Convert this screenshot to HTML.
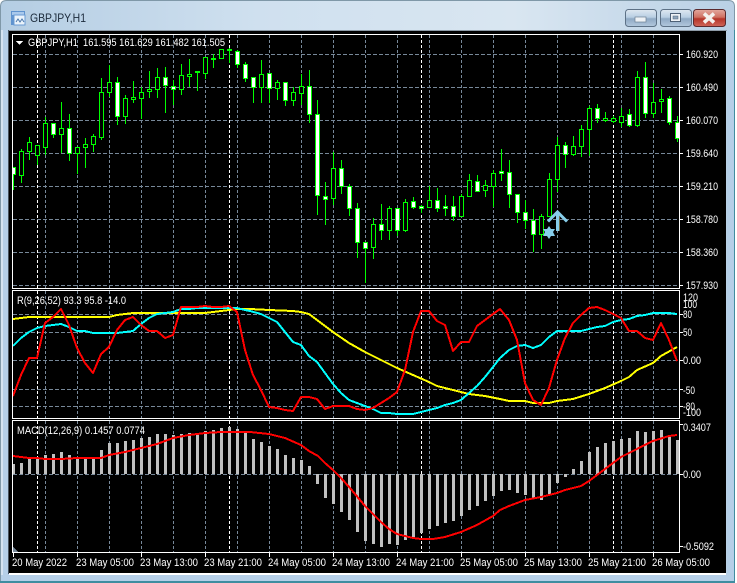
<!DOCTYPE html>
<html><head><meta charset="utf-8"><title>GBPJPY,H1</title>
<style>
html,body{margin:0;padding:0;background:#fff;width:737px;height:583px;overflow:hidden}
svg{position:absolute;left:0;top:0;display:block}
text{font-family:"Liberation Sans",sans-serif;font-size:11px;fill:#fff}
</style></head><body>
<svg width="737" height="583" viewBox="0 0 737 583" xmlns="http://www.w3.org/2000/svg">
<defs>
<linearGradient id="tb" x1="0" y1="0" x2="1" y2="0"><stop offset="0" stop-color="#b4cde3"/><stop offset=".35" stop-color="#cfe0ef"/><stop offset=".7" stop-color="#d9e6f1"/><stop offset="1" stop-color="#b9d0e5"/></linearGradient>
<linearGradient id="bt" x1="0" y1="0" x2="0" y2="1"><stop offset="0" stop-color="#dfe8f1"/><stop offset=".45" stop-color="#b9cfe3"/><stop offset=".55" stop-color="#8fa9c4"/><stop offset="1" stop-color="#b3c9de"/></linearGradient>
<linearGradient id="cl" x1="0" y1="0" x2="0" y2="1"><stop offset="0" stop-color="#e3a99f"/><stop offset=".45" stop-color="#cf7163"/><stop offset=".55" stop-color="#b5352a"/><stop offset="1" stop-color="#d0675a"/></linearGradient>
<clipPath id="c1"><rect x="13" y="35" width="666" height="253"/></clipPath>
<clipPath id="c2"><rect x="13" y="291" width="666" height="127"/></clipPath>
<clipPath id="c3"><rect x="13" y="421" width="666" height="131"/></clipPath>
</defs>

<!-- window chrome -->
<path d="M.5 582.5V6.5Q.5 .5 6.5 .5H728.5Q734.5 .5 734.5 6.5V582.5Z" fill="url(#tb)" stroke="#7f98a8"/>
<rect x="1" y="30" width="8" height="551" fill="#b5cfe8"/>
<rect x="1" y="30" width="2" height="551" fill="#d5e3f1"/>
<rect x="727" y="30" width="7" height="551" fill="#b5cfe8"/>
<rect x="1" y="575" width="733" height="6" fill="#b5cfe8"/>
<rect x="0" y="581" width="735" height="2" fill="#3f8da0"/>
<rect x="734" y="30" width="1" height="553" fill="#3f8da0"/>
<rect x="8" y="30" width="1" height="544" fill="#45525e"/>
<rect x="9" y="31" width="717" height="542" fill="#000"/>
<rect x="9" y="573" width="717" height="2" fill="#fff"/>
<rect x="9" y="30" width="718" height="1" fill="#8d9aa6"/>

<!-- title icon and text -->
<g shape-rendering="crispEdges">
<rect x="11" y="11" width="14" height="14" fill="#5f93cf"/>
<rect x="12" y="12" width="12" height="3" fill="#a9c9ec"/>
<rect x="14" y="15" width="11" height="10" fill="#eaf3fb" stroke="#6a9bd3"/>
</g>
<path d="M16 22l2-3 2 3 2-3 2 3" fill="none" stroke="#4a78ad"/>
<text x="30" y="22" style="font-size:12px;fill:#1b2a3a" textLength="56" lengthAdjust="spacingAndGlyphs">GBPJPY,H1</text>

<!-- window buttons -->
<rect x="625.5" y="9.5" width="31" height="17" rx="3" fill="url(#bt)" stroke="#5d7186"/>
<rect x="635" y="17" width="11" height="5" fill="#eef2f6" stroke="#6b7f93" stroke-width=".7"/>
<rect x="660.5" y="9.5" width="31" height="17" rx="3" fill="url(#bt)" stroke="#5d7186"/>
<rect x="670.5" y="13.5" width="10" height="8" fill="#eef2f6" stroke="#4e6176"/>
<rect x="673" y="16" width="5" height="3" fill="#8fa5bb" stroke="#4e6176" stroke-width=".5"/>
<rect x="693.5" y="9.5" width="32" height="17" rx="3" fill="url(#cl)" stroke="#5b2a2e"/>
<path d="M704 13.5l10 9M714 13.5l-10 9" stroke="#f4f1ee" stroke-width="3.6" fill="none"/>

<g shape-rendering="crispEdges">
<!-- grids -->
<path d="M45.5 35V288M77.5 35V288M109.5 35V288M141.5 35V288M173.5 35V288M205.5 35V288M237.5 35V288M269.5 35V288M301.5 35V288M333.5 35V288M365.5 35V288M397.5 35V288M429.5 35V288M461.5 35V288M493.5 35V288M525.5 35V288M557.5 35V288M589.5 35V288M621.5 35V288M653.5 35V288
M45.5 291V418M77.5 291V418M109.5 291V418M141.5 291V418M173.5 291V418M205.5 291V418M237.5 291V418M269.5 291V418M301.5 291V418M333.5 291V418M365.5 291V418M397.5 291V418M429.5 291V418M461.5 291V418M493.5 291V418M525.5 291V418M557.5 291V418M589.5 291V418M621.5 291V418M653.5 291V418
M45.5 421V552M77.5 421V552M109.5 421V552M141.5 421V552M173.5 421V552M205.5 421V552M237.5 421V552M269.5 421V552M301.5 421V552M333.5 421V552M365.5 421V552M397.5 421V552M429.5 421V552M461.5 421V552M493.5 421V552M525.5 421V552M557.5 421V552M589.5 421V552M621.5 421V552M653.5 421V552" stroke="#778899" stroke-dasharray="3 2" fill="none"/>
<path d="M13 54.5H679M13 87.5H679M13 120.5H679M13 153.5H679M13 186.5H679M13 219.5H679M13 252.5H679M13 285.5H679
M13 314.5H679M13 332.5H679M13 360.5H679M13 389.5H679M13 406.5H679M13 474.5H679" stroke="#778899" stroke-dasharray="4 2" fill="none"/>
<path d="M37.5 35V288M229.5 35V288M421.5 35V288M613.5 35V288M37.5 291V418M229.5 291V418M421.5 291V418M613.5 291V418M37.5 421V552M229.5 421V552M421.5 421V552M613.5 421V552" stroke="#fff" stroke-dasharray="3 2" fill="none"/>

<!-- candles -->
<g clip-path="url(#c1)">
<path fill="#00ff00" d="M13 167h1v23h-1zM21 149h1v34h-1zM29 137h1v23h-1zM37 145h1v20h-1zM45 117h1v38h-1zM53 123h1v15h-1zM61 102h1v51h-1zM69 114h1v47h-1zM77 147h1v27h-1zM85 138h1v30h-1zM93 134h1v18h-1zM101 78h1v62h-1zM109 65h1v32h-1zM117 77h1v48h-1zM125 95h1v29h-1zM133 81h1v22h-1zM141 87h1v32h-1zM149 71h1v27h-1zM157 68h1v30h-1zM165 67h1v46h-1zM173 80h1v25h-1zM181 64h1v31h-1zM189 59h1v28h-1zM197 71h1v20h-1zM205 57h1v22h-1zM213 54h1v14h-1zM221 49h1v9h-1zM229 48h1v15h-1zM237 50h1v18h-1zM245 62h1v20h-1zM253 77h1v26h-1zM261 60h1v43h-1zM269 73h1v30h-1zM277 80h1v20h-1zM285 82h1v24h-1zM293 87h1v19h-1zM301 74h1v31h-1zM309 70h1v53h-1zM317 100h1v115h-1zM325 182h1v43h-1zM333 152h1v53h-1zM341 160h1v34h-1zM349 184h1v32h-1zM357 203h1v55h-1zM365 242h1v41h-1zM373 218h1v41h-1zM381 204h1v36h-1zM389 206h1v34h-1zM397 208h1v28h-1zM405 199h1v33h-1zM413 197h1v12h-1zM421 205h1v8h-1zM429 186h1v21h-1zM437 188h1v24h-1zM445 195h1v21h-1zM453 196h1v25h-1zM461 194h1v22h-1zM469 174h1v23h-1zM477 175h1v16h-1zM485 180h1v17h-1zM493 170h1v37h-1zM501 149h1v32h-1zM509 160h1v48h-1zM517 194h1v29h-1zM525 200h1v29h-1zM533 209h1v43h-1zM541 214h1v35h-1zM549 173h1v43h-1zM557 137h1v55h-1zM565 142h1v26h-1zM573 136h1v20h-1zM581 125h1v32h-1zM589 106h1v50h-1zM597 104h1v19h-1zM605 112h1v10h-1zM613 116h1v7h-1zM621 108h1v19h-1zM629 109h1v18h-1zM637 71h1v56h-1zM645 62h1v56h-1zM653 83h1v35h-1zM661 89h1v24h-1zM669 96h1v29h-1zM677 116h1v26h-1z"/>
<path stroke="#00ff00" fill="#000" d="M19.5 151.5h4v24h-4zM27.5 142.5h4v9h-4zM35.5 145.5h4v10h-4zM43.5 123.5h4v24h-4zM59.5 128.5h4v6h-4zM75.5 147.5h4v6h-4zM83.5 144.5h4v3h-4zM91.5 136.5h4v8h-4zM99.5 92.5h4v45h-4zM107.5 82.5h4v10h-4zM123.5 98.5h4v18h-4zM131.5 97.5h4v2h-4zM139.5 92.5h4v6h-4zM147.5 89.5h4v2h-4zM155.5 77.5h4v12h-4zM179.5 75.5h4v14h-4zM187.5 74.5h4v2h-4zM195.5 71.5h4v1h-4zM203.5 57.5h4v16h-4zM211.5 58.5h4v1h-4zM219.5 49.5h4v9h-4zM227.5 49.5h4v1h-4zM259.5 74.5h4v13h-4zM275.5 82.5h4v6h-4zM291.5 92.5h4v8h-4zM299.5 86.5h4v7h-4zM331.5 168.5h4v30h-4zM371.5 224.5h4v23h-4zM387.5 208.5h4v22h-4zM403.5 202.5h4v28h-4zM427.5 200.5h4v7h-4zM459.5 196.5h4v20h-4zM467.5 180.5h4v16h-4zM483.5 185.5h4v5h-4zM491.5 173.5h4v13h-4zM539.5 216.5h4v18h-4zM547.5 179.5h4v37h-4zM555.5 145.5h4v34h-4zM571.5 146.5h4v8h-4zM579.5 129.5h4v17h-4zM587.5 108.5h4v21h-4zM603.5 118.5h4v2h-4zM611.5 118.5h4v3h-4zM619.5 116.5h4v6h-4zM635.5 77.5h4v48h-4zM651.5 102.5h4v11h-4zM659.5 99.5h4v2h-4z"/>
<path stroke="#00ff00" fill="#fff" d="M11.5 167.5h4v7h-4zM51.5 123.5h4v11h-4zM67.5 128.5h4v25h-4zM115.5 82.5h4v34h-4zM163.5 77.5h4v8h-4zM171.5 86.5h4v3h-4zM235.5 51.5h4v13h-4zM243.5 64.5h4v14h-4zM251.5 77.5h4v10h-4zM267.5 73.5h4v15h-4zM283.5 82.5h4v18h-4zM307.5 86.5h4v28h-4zM315.5 114.5h4v81h-4zM323.5 196.5h4v3h-4zM339.5 168.5h4v18h-4zM347.5 186.5h4v22h-4zM355.5 208.5h4v34h-4zM363.5 242.5h4v6h-4zM379.5 224.5h4v6h-4zM395.5 208.5h4v22h-4zM411.5 201.5h4v6h-4zM419.5 206.5h4v2h-4zM435.5 200.5h4v8h-4zM443.5 206.5h4v2h-4zM451.5 206.5h4v10h-4zM475.5 181.5h4v10h-4zM499.5 171.5h4v2h-4zM507.5 172.5h4v22h-4zM515.5 194.5h4v18h-4zM523.5 212.5h4v8h-4zM531.5 220.5h4v14h-4zM563.5 145.5h4v9h-4zM595.5 108.5h4v10h-4zM627.5 114.5h4v11h-4zM643.5 77.5h4v36h-4zM667.5 98.5h4v24h-4zM675.5 122.5h4v16h-4z"/>
</g>

<!-- indicator 2 -->
<g clip-path="url(#c2)" fill="none" stroke-width="2" stroke-linejoin="round">
<polyline stroke="#ffff00" points="13,319 29,317 37,317 61,317 109,317 117,315 133,313 141,313 181,313 205,313 221,311 237,309 250,309 269,310 293,311 301,312 309,314 325,326 333,332 349,343 365,352 373,356 397,368 413,375 429,382 437,386 453,390 469,394 485,396 500,399 509,401 525,401 533,403 549,403 557,401 573,399 589,394 605,388 621,381 629,377 637,370 653,363 661,356 677,347"/>
<polyline stroke="#00ffff" points="13,346 21,338 29,332 37,328 45,326 53,325 61,324 69,327 77,331 85,331 93,333 101,333 109,333 117,333 125,332 133,331 141,324 149,318 157,314 165,313 173,312 181,309 189,309 197,308 205,308 213,308 221,308 229,308 237,308 245,310 250,311 261,314 269,318 277,322 285,332 293,342 301,345 309,356 317,362 325,373 333,384 341,393 349,400 357,403 365,406 373,409 381,413 389,413 397,414 405,414 413,414 421,412 429,410 437,408 445,405 453,403 461,400 469,393 477,386 485,377 493,367 500,358 509,350 517,346 525,345 533,348 541,345 549,337 557,331 565,331 573,331 581,331 589,329 597,327 605,326 613,322 621,320 629,319 637,316 645,315 653,313 661,313 669,313 677,314"/>
<polyline stroke="#ff0000" points="13,396 21,375 29,358 37,358 45,323 53,317 61,309 69,325 77,348 85,363 93,373 101,354 109,347 117,330 125,320 133,317 141,325 149,331 157,331 165,338 173,335 181,307 189,307 197,307 205,306 213,307 221,307 229,306 237,312 245,350 253,375 261,390 269,407 277,408 285,410 293,411 301,397 309,397 317,399 325,409 333,406 341,406 349,406 357,409 365,410 373,408 381,403 389,398 397,392 405,370 413,332 421,311 429,311 437,321 445,325 453,351 461,342 469,342 477,326 485,320 493,314 500,309 509,320 517,340 525,383 533,400 541,405 549,388 557,360 565,338 573,323 581,315 589,308 597,307 605,310 613,314 621,318 629,331 637,331 645,338 653,340 661,323 669,340 677,361"/>
</g>

<!-- MACD bars -->
<g clip-path="url(#c3)">
<path fill="#c0c0c0" d="M12 464h3v10h-3zM20 463h3v11h-3zM28 459h3v15h-3zM36 458h3v16h-3zM44 455h3v19h-3zM52 454h3v20h-3zM60 452h3v22h-3zM68 455h3v19h-3zM76 458h3v16h-3zM84 458h3v16h-3zM92 457h3v17h-3zM100 450h3v24h-3zM108 443h3v31h-3zM116 443h3v31h-3zM124 441h3v33h-3zM132 440h3v34h-3zM140 438h3v36h-3zM148 437h3v37h-3zM156 434h3v40h-3zM164 434h3v40h-3zM172 435h3v39h-3zM180 434h3v40h-3zM188 433h3v41h-3zM196 433h3v41h-3zM204 431h3v43h-3zM212 430h3v44h-3zM220 428h3v46h-3zM228 427h3v47h-3zM236 429h3v45h-3zM244 431h3v43h-3zM252 439h3v35h-3zM260 442h3v32h-3zM268 446h3v28h-3zM276 449h3v25h-3zM284 455h3v19h-3zM292 458h3v16h-3zM300 460h3v14h-3zM308 466h3v8h-3zM316 474h3v10h-3zM324 474h3v24h-3zM332 474h3v30h-3zM340 474h3v38h-3zM348 474h3v46h-3zM356 474h3v58h-3zM364 474h3v67h-3zM372 474h3v70h-3zM380 474h3v73h-3zM388 474h3v70h-3zM396 474h3v71h-3zM404 474h3v66h-3zM412 474h3v64h-3zM420 474h3v59h-3zM428 474h3v55h-3zM436 474h3v52h-3zM444 474h3v49h-3zM452 474h3v47h-3zM460 474h3v42h-3zM468 474h3v36h-3zM476 474h3v32h-3zM484 474h3v27h-3zM492 474h3v22h-3zM500 474h3v17h-3zM508 474h3v16h-3zM516 474h3v19h-3zM524 474h3v21h-3zM532 474h3v25h-3zM540 474h3v26h-3zM548 474h3v20h-3zM556 474h3v9h-3zM564 474h3v3h-3zM572 469h3v5h-3zM580 461h3v13h-3zM588 452h3v22h-3zM596 447h3v27h-3zM604 443h3v31h-3zM612 441h3v33h-3zM620 439h3v35h-3zM628 438h3v36h-3zM636 431h3v43h-3zM644 432h3v42h-3zM652 431h3v43h-3zM660 430h3v44h-3zM668 435h3v39h-3zM676 440h3v34h-3z"/>
<polyline fill="none" stroke="#ff0000" stroke-width="2" points="13,456 29,458 37,458 45,459 61,459 77,458 101,458 109,455 125,452 141,448 157,444 173,438 189,435 205,433 221,432 245,432 250,432 269,434 285,438 301,445 309,451 318,456 325,463 333,470 341,478 350,488 365,506 373,514 381,522 389,529 397,534 413,538 421,539 433,539 445,537 461,532 477,525 493,516 500,510 509,506 525,500 541,497 557,493 565,490 581,486 589,481 597,475 605,469 613,463 621,457 637,449 653,441 669,436 677,435"/>
<path d="M13 547l5 5h-5z" fill="#778899"/>
</g>

<!-- frames -->
<path d="M12.5 34.5H679.5V288.5H12.5zM12.5 290.5H679.5V418.5H12.5zM12.5 420.5H679.5V552.5H12.5z" fill="none" stroke="#fff"/>
<!-- ticks -->
<path d="M680 54.5h3M680 87.5h3M680 120.5h3M680 153.5h3M680 186.5h3M680 219.5h3M680 252.5h3M680 285.5h3M680 314.5h3M680 332.5h3M680 360.5h3M680 389.5h3M680 406.5h3M680 424.5h3M680 474.5h3M680 546.5h3M13.5 553v4M77.5 553v4M141.5 553v4M205.5 553v4M269.5 553v4M333.5 553v4M397.5 553v4M461.5 553v4M525.5 553v4M589.5 553v4M653.5 553v4" stroke="#fff" fill="none"/>
<path d="M16 41h7l-3.5 4z" fill="#fff"/>
</g>

<!-- arrow + star -->
<path d="M558 231V213" fill="none" stroke="#6d6a45" stroke-width="1" transform="translate(1.5 0)"/>
<path d="M548 221.5L557.5 212L567 221.5M557.5 212V231" fill="none" stroke="#87ceeb" stroke-width="3"/>
<path d="M549 226l2 3h4l-2 3 2 4h-4l-2 3-2-3h-4l2-4-2-3h4z" fill="#87ceeb"/>

<!-- labels -->
<text x="28" y="46" textLength="197" lengthAdjust="spacingAndGlyphs" xml:space="preserve">GBPJPY,H1  161.595 161.629 161.482 161.505</text>
<text x="17" y="304" textLength="109" lengthAdjust="spacingAndGlyphs">R(9,26,52) 93.3 95.8 -14.0</text>
<text x="17" y="434" textLength="128" lengthAdjust="spacingAndGlyphs">MACD(12,26,9) 0.1457 0.0774</text>

<text x="686" y="58" textLength="32" lengthAdjust="spacingAndGlyphs">160.920</text>
<text x="686" y="91" textLength="32" lengthAdjust="spacingAndGlyphs">160.490</text>
<text x="686" y="124" textLength="32" lengthAdjust="spacingAndGlyphs">160.070</text>
<text x="686" y="157" textLength="32" lengthAdjust="spacingAndGlyphs">159.640</text>
<text x="686" y="190" textLength="32" lengthAdjust="spacingAndGlyphs">159.210</text>
<text x="686" y="223" textLength="32" lengthAdjust="spacingAndGlyphs">158.780</text>
<text x="686" y="256" textLength="32" lengthAdjust="spacingAndGlyphs">158.360</text>
<text x="686" y="289" textLength="32" lengthAdjust="spacingAndGlyphs">157.930</text>

<text x="683" y="301" textLength="15" lengthAdjust="spacingAndGlyphs">120</text>
<text x="683" y="308" textLength="14" lengthAdjust="spacingAndGlyphs">100</text>
<text x="683" y="318" textLength="9" lengthAdjust="spacingAndGlyphs">80</text>
<text x="683" y="336" textLength="9" lengthAdjust="spacingAndGlyphs">50</text>
<text x="683" y="364" textLength="18" lengthAdjust="spacingAndGlyphs">0.00</text>
<text x="683" y="394" textLength="12" lengthAdjust="spacingAndGlyphs">-50</text>
<text x="683" y="410" textLength="12" lengthAdjust="spacingAndGlyphs">-80</text>
<text x="683" y="416" textLength="18" lengthAdjust="spacingAndGlyphs">-100</text>

<text x="683" y="431" textLength="28" lengthAdjust="spacingAndGlyphs">0.3407</text>
<text x="683" y="478" textLength="18" lengthAdjust="spacingAndGlyphs">0.00</text>
<text x="683" y="550" textLength="31" lengthAdjust="spacingAndGlyphs">-0.5092</text>

<text x="12" y="566" textLength="55" lengthAdjust="spacingAndGlyphs">20 May 2022</text>
<text x="76" y="566" textLength="58" lengthAdjust="spacingAndGlyphs">23 May 05:00</text>
<text x="140" y="566" textLength="58" lengthAdjust="spacingAndGlyphs">23 May 13:00</text>
<text x="204" y="566" textLength="58" lengthAdjust="spacingAndGlyphs">23 May 21:00</text>
<text x="268" y="566" textLength="58" lengthAdjust="spacingAndGlyphs">24 May 05:00</text>
<text x="332" y="566" textLength="58" lengthAdjust="spacingAndGlyphs">24 May 13:00</text>
<text x="396" y="566" textLength="58" lengthAdjust="spacingAndGlyphs">24 May 21:00</text>
<text x="460" y="566" textLength="58" lengthAdjust="spacingAndGlyphs">25 May 05:00</text>
<text x="524" y="566" textLength="58" lengthAdjust="spacingAndGlyphs">25 May 13:00</text>
<text x="588" y="566" textLength="58" lengthAdjust="spacingAndGlyphs">25 May 21:00</text>
<text x="652" y="566" textLength="58" lengthAdjust="spacingAndGlyphs">26 May 05:00</text>
</svg>
</body></html>
